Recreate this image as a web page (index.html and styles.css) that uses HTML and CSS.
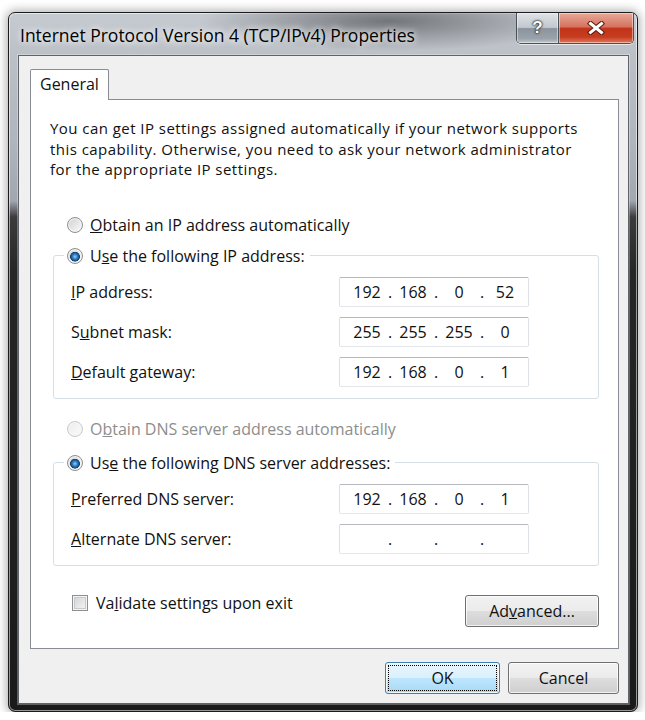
FILE: index.html
```html
<!DOCTYPE html>
<html lang="en">
<head>
    <meta charset="UTF-8">
    <meta name="viewport" content="width=device-width, initial-scale=1.0">
    <title>Internet Protocol Version 4 (TCP/IPv4) Properties</title>
    <link rel="stylesheet" href="styles.css">
</head>
<body>
    <div class="window">
        <div class="titlebar">
            <div class="title">Internet Protocol Version 4 (TCP/IPv4) Properties</div>
            <div class="caption-buttons">
                <div class="cap-btn help">?</div>
                <div class="cap-btn close">
                    <svg width="18" height="14" viewBox="0 0 18 14">
                        <path d="M3.5 2.5 L14.5 11.5 M14.5 2.5 L3.5 11.5" stroke="#5a1a0c" stroke-width="5" stroke-linecap="square" fill="none"/>
                        <path d="M3.5 2.5 L14.5 11.5 M14.5 2.5 L3.5 11.5" stroke="#fff" stroke-width="3" stroke-linecap="square" fill="none"/>
                    </svg>
                </div>
            </div>
        </div>

        <div class="client">
            <div class="tabs">
                <div class="tab active">General</div>
            </div>

            <div class="panel">
                <p class="intro">You can get IP settings assigned automatically if your network supports<br>this capability. Otherwise, you need to ask your network administrator<br>for the appropriate IP settings.</p>

                <label class="option first">
                    <input type="radio" name="ip" class="radio">
                    <span><u>O</u>btain an IP address automatically</span>
                </label>

                <fieldset class="group">
                    <legend>
                        <label class="option">
                            <input type="radio" name="ip" class="radio" checked>
                            <span>U<u>s</u>e the following IP address:</span>
                        </label>
                    </legend>
                    <div class="field">
                        <span class="field-label"><u>I</u>P address:</span>
                        <div class="ip-box"><span>192</span><i>.</i><span>168</span><i>.</i><span>0</span><i>.</i><span>52</span></div>
                    </div>
                    <div class="field">
                        <span class="field-label">S<u>u</u>bnet mask:</span>
                        <div class="ip-box"><span>255</span><i>.</i><span>255</span><i>.</i><span>255</span><i>.</i><span>0</span></div>
                    </div>
                    <div class="field">
                        <span class="field-label"><u>D</u>efault gateway:</span>
                        <div class="ip-box"><span>192</span><i>.</i><span>168</span><i>.</i><span>0</span><i>.</i><span>1</span></div>
                    </div>
                </fieldset>

                <label class="option second disabled">
                    <input type="radio" name="dns" class="radio" disabled>
                    <span>O<u>b</u>tain DNS server address automatically</span>
                </label>

                <fieldset class="group dns">
                    <legend>
                        <label class="option">
                            <input type="radio" name="dns" class="radio" checked>
                            <span>Us<u>e</u> the following DNS server addresses:</span>
                        </label>
                    </legend>
                    <div class="field">
                        <span class="field-label"><u>P</u>referred DNS server:</span>
                        <div class="ip-box"><span>192</span><i>.</i><span>168</span><i>.</i><span>0</span><i>.</i><span>1</span></div>
                    </div>
                    <div class="field">
                        <span class="field-label"><u>A</u>lternate DNS server:</span>
                        <div class="ip-box"><span></span><i>.</i><span></span><i>.</i><span></span><i>.</i><span></span></div>
                    </div>
                </fieldset>

                <div class="bottom-row">
                    <label class="option validate">
                        <input type="checkbox" class="check">
                        <span>Va<u>l</u>idate settings upon exit</span>
                    </label>
                    <button class="btn advanced">Ad<u>v</u>anced...</button>
                </div>
            </div>

            <div class="dialog-buttons">
                <button class="btn default ok">OK</button>
                <button class="btn cancel">Cancel</button>
            </div>
        </div>
    </div>
</body>
</html>
```

FILE: styles.css
```css
body {
    margin: 0;
    background-color: #fff;
    font-family: 'Open Sans', 'Noto Sans', sans-serif;
    font-size: 16px;
    color: #111;
}

.window {
    box-sizing: border-box;
    width: 630px;
    margin: 12px 0 0 8px;
    padding-bottom: 7px;
    border: 1px solid #1c1c1c;
    border-radius: 7px;
    background: linear-gradient(to bottom, #c6cbd1 0px, #bbc0c6 45px, #afb5bc 130px, #a1a7ae 188px, #3b3b3b 204px, #262626 260px, #1a1a1a 100%);
    box-shadow: 0 0 10px 2px rgba(0, 0, 0, 0.3), inset 0 0 0 1px rgba(255, 255, 255, 0.55);
}

.titlebar {
    display: flex;
    height: 42px;
    padding: 0 3px 0 11px;
    background: radial-gradient(ellipse 190px 30px at 380px 8px, rgba(60, 62, 66, 0.6), rgba(60, 62, 66, 0));
    border-radius: 6px 6px 0 0;
}

.title {
    flex: 1;
    padding-top: 11px;
    font-size: 17.5px;
    line-height: 22px;
    color: #000;
    white-space: nowrap;
    text-shadow: 0 0 6px #fff, 0 0 10px rgba(255, 255, 255, 0.8);
}

.caption-buttons {
    display: flex;
    height: 30px;
    border: 1px solid #4b5058;
    border-top: none;
    border-radius: 0 0 5px 5px;
    overflow: hidden;
    box-shadow: 0 1px 0 rgba(255, 255, 255, 0.6);
}

.cap-btn {
    display: flex;
    align-items: center;
    justify-content: center;
    box-shadow: inset 0 0 0 1px rgba(255, 255, 255, 0.45);
}

.help {
    width: 41px;
    border-right: 1px solid #4b5058;
    background: linear-gradient(to bottom, #dfe3e7 0%, #c2c8ce 48%, #8b949e 52%, #9aa2ab 85%, #c0c6cc 100%);
    font-family: 'Liberation Sans', 'DejaVu Sans', sans-serif;
    font-weight: bold;
    font-size: 17px;
    color: #fff;
    text-shadow: 0 0 1px #1d232b, 0 0 2px #1d232b, 0 0 3px #3a414a;
}

.close {
    width: 74px;
    background: linear-gradient(to bottom, #e9a999 0%, #d57560 45%, #c2341a 52%, #c73c1f 80%, #e27a5d 100%);
}

.client {
    margin: 0 8px 0 9px;
    padding: 13px 9px 9px 11px;
    background-color: #f0f0f0;
    border: 1px solid #5f646a;
    box-shadow: 0 0 0 1px rgba(255, 255, 255, 0.3);
}

.tabs {
    display: flex;
    margin-bottom: -1px;
}

.tab {
    position: relative;
    z-index: 1;
    padding: 3px 9px 5px;
    line-height: 22px;
    background-color: #fff;
    border: 1px solid #898c95;
    border-bottom: none;
    border-radius: 2px 2px 0 0;
}

.panel {
    padding: 18px 19px 21px 19px;
    background-color: #fff;
    border: 1px solid #898c95;
}

.intro {
    margin: 0;
    font-size: 15px;
    line-height: 20.5px;
    letter-spacing: 0.45px;
    white-space: nowrap;
}

.option {
    display: flex;
    align-items: center;
    gap: 7px;
    height: 22px;
    line-height: 22px;
    white-space: nowrap;
}

.option.first {
    margin: 34px 0 0 17px;
}

.option.second {
    margin: 19px 0 0 17px;
}

.option.disabled {
    color: #8d8d8d;
}

.radio {
    -webkit-appearance: none;
    appearance: none;
    flex: none;
    width: 16px;
    height: 16px;
    margin: 0;
    border: 1px solid #8e8f8f;
    border-radius: 50%;
    background: linear-gradient(135deg, #cfcfcf, #fbfbfb);
    box-shadow: inset 0 0 0 1px #f6f6f6;
}

.radio:checked {
    background: radial-gradient(circle at 50% 55%, #9ad2f8 0, #3b8bd2 2px, #1d5f9e 3.5px, #143e68 4.6px, rgba(20, 62, 104, 0) 5.2px), linear-gradient(135deg, #d3d3d3, #fbfbfb);
}

.radio:disabled {
    border-color: #c9c9c9;
    background: linear-gradient(135deg, #ececec, #fbfbfb);
}

.group {
    margin: 9px 0 0 3px;
    padding: 10px 17px 11px 17px;
    border: 1px solid #d5dfe5;
    border-radius: 3px;
    min-width: 0;
}

.group.dns {
    margin-top: 12px;
}

.group legend {
    margin-left: -7px;
    padding: 0 5px 0 3px;
}

.field {
    display: flex;
    align-items: center;
    height: 30px;
    line-height: 22px;
}

.field + .field {
    margin-top: 10px;
}

.field-label {
    width: 268px;
}

.ip-box {
    box-sizing: border-box;
    display: flex;
    align-items: center;
    width: 190px;
    height: 30px;
    padding-left: 9px;
    background-color: #fff;
    border: 1px solid;
    border-color: #b5b8bf #dde1e6 #e3e7ec #dde1e6;
    border-radius: 2px;
}

.ip-box span {
    width: 36px;
    text-align: center;
}

.ip-box i {
    width: 10px;
    font-style: normal;
    text-align: center;
}

.bottom-row {
    display: flex;
    justify-content: space-between;
    align-items: flex-start;
    margin-top: 26px;
}

.option.validate {
    margin-left: 22px;
    gap: 8px;
}

.check {
    -webkit-appearance: none;
    appearance: none;
    flex: none;
    width: 16px;
    height: 16px;
    margin: 0;
    border: 1px solid #8f8f8f;
    background: linear-gradient(135deg, #cdd1d5, #f7f7f7);
    box-shadow: inset 0 0 0 1px #f4f4f4, inset 0 0 0 2px #c7cbd0;
}

.btn {
    height: 32px;
    padding: 0;
    font-family: 'Open Sans', 'Noto Sans', sans-serif;
    font-size: 16px;
    color: #111;
    border: 1px solid #707070;
    border-radius: 3px;
    background: linear-gradient(to bottom, #f2f2f2 0%, #ebebeb 50%, #dddddd 51%, #cfcfcf 100%);
    box-shadow: inset 0 0 0 1px rgba(255, 255, 255, 0.75);
}

.btn.advanced {
    width: 134px;
    margin-top: 3px;
}

.dialog-buttons {
    display: flex;
    justify-content: flex-end;
    gap: 8px;
    margin-top: 13px;
}

.btn.ok {
    width: 115px;
}

.btn.cancel {
    width: 111px;
}

.btn.default {
    border-color: #3c7fb1;
    background: linear-gradient(to bottom, #eaf6fd 0%, #d9f0fc 50%, #bee6fd 51%, #a7d9f5 100%);
    outline: 1px dotted #000;
    outline-offset: -4px;
}
```
